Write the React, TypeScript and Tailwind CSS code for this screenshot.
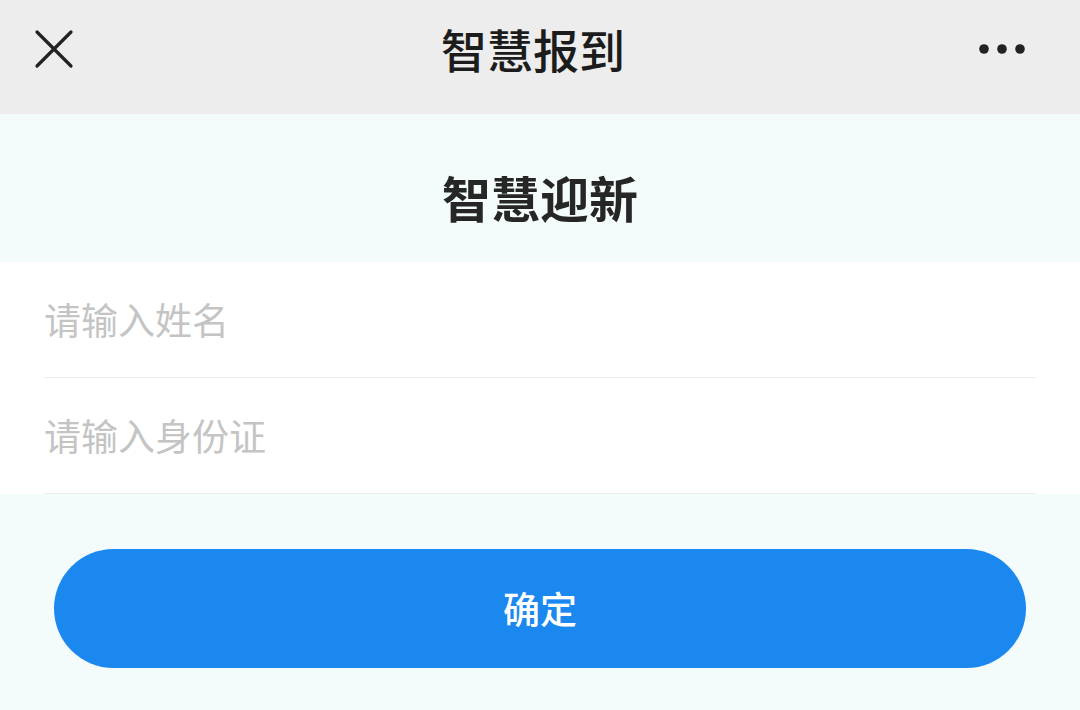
const cjk = '"Noto Sans CJK SC", "Noto Sans", sans-serif';

function CloseIcon() {
  return (
    <svg width="40" height="40" viewBox="0 0 40 40" className="block">
      <path d="M3 3L37 37M37 3L3 37" stroke="#222" strokeWidth="3.2" strokeLinecap="round" />
    </svg>
  );
}

function MoreIcon() {
  return (
    <svg width="50" height="12" viewBox="0 0 50 12" className="block">
      <circle cx="6" cy="6" r="4.8" fill="#222" />
      <circle cx="24" cy="6" r="4.8" fill="#222" />
      <circle cx="42" cy="6" r="4.8" fill="#222" />
    </svg>
  );
}

function Field({ placeholder }: { placeholder: string }) {
  return (
    <div className="flex h-[116px] items-center border-b border-[#ececec]">
      <input
        placeholder={placeholder}
        className="w-full bg-transparent text-[37px] text-[#333] outline-none placeholder:text-[#c4c4c4]"
        style={{ fontFamily: cjk }}
      />
    </div>
  );
}

export default function App() {
  return (
    <div className="flex h-[710px] w-[1080px] flex-col bg-[#f3fbfb]" style={{ fontFamily: cjk }}>
      <header className="flex h-[114px] shrink-0 items-center justify-between bg-[#ededed] pb-[17px] pl-[34px] pr-[52px]">
        <CloseIcon />
        <h1 className="ml-[14px] text-[46px] font-medium text-[#1c1c1c]">智慧报到</h1>
        <MoreIcon />
      </header>
      <div className="flex h-[148px] shrink-0 items-center justify-center pt-[18px]">
        <h2 className="text-[49px] font-bold text-[#262626]">智慧迎新</h2>
      </div>
      <div className="bg-white px-[44px]">
        <Field placeholder="请输入姓名" />
        <Field placeholder="请输入身份证" />
      </div>
      <div className="px-[54px] pt-[55px]">
        <button className="flex h-[119px] w-full items-center justify-center rounded-full bg-[#1b88f0] text-[37px] font-medium text-white">
          确定
        </button>
      </div>
    </div>
  );
}
